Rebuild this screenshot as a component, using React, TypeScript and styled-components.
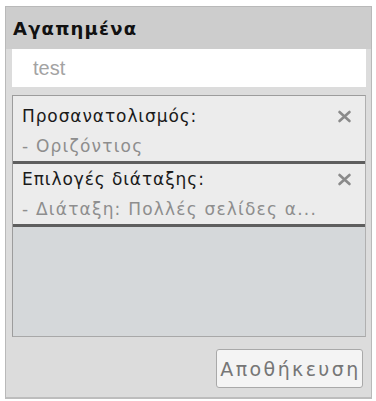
import React from "react";
import styled, { createGlobalStyle } from "styled-components";

const Global = createGlobalStyle`
  html, body { margin: 0; padding: 0; background: #ffffff; }
  body { font-family: "DejaVu Sans", "Liberation Sans", sans-serif; }
`;

const Panel = styled.div`
  margin: 6px 0 0 5px;
  width: 367px;
  height: 393px;
  box-sizing: border-box;
  border: 1px solid #b9b9b9;
  border-bottom: 2px solid #bdbdbd;
  background: #dcdcdc;
  display: flex;
  flex-direction: column;
`;

const Header = styled.div`
  background: #cdcdcd;
  height: 42px;
  padding: 0 0 0 7px;
  display: flex;
  align-items: center;
  font-weight: bold;
  font-size: 18px;
  letter-spacing: 1.2px;
  color: #111;
`;

const Input = styled.div`
  margin: 0 5px 0 6px;
  height: 38px;
  background: #ffffff;
  display: flex;
  align-items: center;
  padding-left: 21px;
  font-family: "Liberation Sans", Arial, sans-serif;
  font-size: 20px;
  color: #a3a3a3;
`;

const List = styled.div`
  margin: 8px 5px 0 6px;
  height: 242px;
  box-sizing: border-box;
  border: 1px solid #9c9c9c;
  border-right-color: #b0b0b0;
  border-bottom-color: #a8a8a8;
  background: #d5d8da;
  display: flex;
  flex-direction: column;
  padding-top: 5px;
`;

const Item = styled.div<{ $first?: boolean }>`
  background: #ececec;
  margin-top: ${(p) => (p.$first ? "-5px" : "0")};
  padding: ${(p) => (p.$first ? "5px" : "0")} 0 0 9px;
  border-bottom: 3px solid #5e5e5e;
  display: flex;
  flex-direction: column;
`;

const Row = styled.div`
  height: 30px;
  display: flex;
  align-items: center;
  justify-content: space-between;
  padding-right: 13px;
`;

const Title = styled.span`
  font-size: 17px;
  letter-spacing: 0.9px;
  color: #1a1a1a;
  white-space: nowrap;
`;

const Sub = styled.span`
  font-size: 17px;
  letter-spacing: 1.2px;
  color: #8e8e8e;
  height: 30px;
  display: flex;
  align-items: center;
  white-space: nowrap;
`;

const Close = styled.svg`
  width: 15px;
  height: 13px;
  display: block;
`;

const Footer = styled.div`
  display: flex;
  justify-content: flex-end;
  padding: 12px 8px 0 0;
`;

const Button = styled.button`
  width: 147px;
  height: 39px;
  box-sizing: border-box;
  border: 1px solid #a9a9a9;
  border-radius: 3px;
  background: #f4f4f4;
  color: #767676;
  font-family: "DejaVu Sans", sans-serif;
  font-size: 19px;
  letter-spacing: 2.4px;
  padding: 0 0 0 2px;
  white-space: nowrap;
`;

const X = () => (
  <Close viewBox="0 0 15 13">
    <path d="M2.5 2 L12.5 11 M12.5 2 L2.5 11" stroke="#8a8a8a" strokeWidth="2.6" strokeLinecap="round" />
  </Close>
);

export default function App() {
  return (
    <>
      <Global />
      <Panel>
        <Header>Αγαπημένα</Header>
        <Input>test</Input>
        <List>
          <Item $first>
            <Row>
              <Title>Προσανατολισμός:</Title>
              <X />
            </Row>
            <Sub>- Οριζόντιος</Sub>
          </Item>
          <Item>
            <Row>
              <Title>Επιλογές διάταξης:</Title>
              <X />
            </Row>
            <Sub>- Διάταξη: Πολλές σελίδες α...</Sub>
          </Item>
        </List>
        <Footer>
          <Button>Αποθήκευση</Button>
        </Footer>
      </Panel>
    </>
  );
}
